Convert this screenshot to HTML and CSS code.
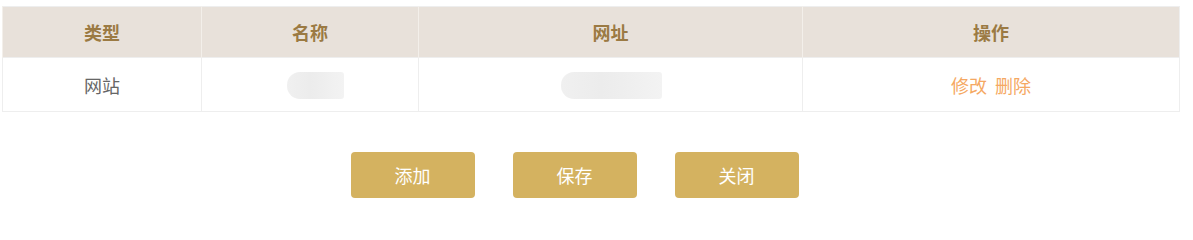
FILE: index.html
```html
<!DOCTYPE html>
<html lang="zh-CN">
<head>
<meta charset="utf-8">
<title>网站列表</title>
<link rel="stylesheet" href="styles.css">
</head>
<body>
<div class="page">
  <table class="grid">
    <colgroup>
      <col class="c1"><col class="c2"><col class="c3"><col class="c4">
    </colgroup>
    <thead>
      <tr><th>类型</th><th>名称</th><th>网址</th><th>操作</th></tr>
    </thead>
    <tbody>
      <tr>
        <td>网站</td>
        <td><span class="blur blur-name"></span></td>
        <td><span class="blur blur-url"></span></td>
        <td><a class="op" href="#">修改</a> <a class="op" href="#">删除</a></td>
      </tr>
    </tbody>
  </table>
  <div class="actions">
    <button class="btn">添加</button>
    <button class="btn">保存</button>
    <button class="btn">关闭</button>
  </div>
</div>
</body>
</html>
```
FILE: styles.css
```css
html, body {
  margin: 0;
  padding: 0;
  background: #ffffff;
}
body {
  font-family: "Noto Sans CJK SC", "Noto Sans", sans-serif;
}
.page {
  padding: 6px 0 0 2px;
  width: 1177px;
}
.grid {
  width: 1177px;
  border-collapse: collapse;
  table-layout: fixed;
  border: 1px solid #eeeeee;
}
.c1 { width: 199px; }
.c2 { width: 217px; }
.c3 { width: 384px; }
.c4 { width: 377px; }
.grid th {
  height: 50px;
  background: #e8e1da;
  color: #9b7a43;
  font-size: 18px;
  font-weight: bold;
  text-align: center;
  vertical-align: middle;
  border-left: 1px solid #f3efea;
  padding: 0;
}
.grid td {
  height: 53px;
  color: #666666;
  font-size: 18px;
  text-align: center;
  vertical-align: middle;
  border-left: 1px solid #eeeeee;
  border-top: 1px solid #eeeeee;
  padding: 0;
}
.blur {
  display: inline-block;
  height: 27px;
  vertical-align: middle;
  border-radius: 13px 3px 3px 13px;
  background: linear-gradient(90deg, #f0f0f0 0%, #ececec 40%, #eeeeee 60%, #f3f3f3 100%);
}
.blur-name { width: 57px; margin-left: 10px; }
.blur-url { width: 101px; margin-left: 1px; }
.op {
  color: #f5a862;
  text-decoration: none;
  margin: 0 2px;
}
.actions {
  width: 1145px;
  display: flex;
  justify-content: center;
  gap: 38px;
  margin-top: 40px;
}
.btn {
  width: 124px;
  height: 46px;
  border: none;
  border-radius: 4px;
  background: #d4b260;
  color: #ffffff;
  font-family: "Noto Sans CJK SC", "Noto Sans", sans-serif;
  font-size: 18px;
  padding: 0;
  cursor: pointer;
}
```
